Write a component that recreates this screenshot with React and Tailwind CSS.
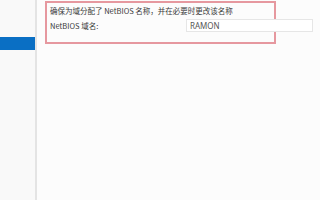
import React from "react";

export default function App() {
  return (
    <div
      className="flex w-[320px] h-[200px] bg-[#fcfcfc] overflow-hidden"
      style={{ fontFamily: '"Noto Sans CJK SC", "Noto Sans", sans-serif' }}
    >
      <div className="w-[37px] shrink-0 bg-[#f9f9f9] border-r-2 border-[#e4e4e4] pt-[37px]">
        <div className="h-[13px] bg-[#0a6fc4]" />
      </div>
      <div className="flex-1 pl-[8px] pt-[1px]">
        <div className="w-[231px] h-[43px] border-2 border-[#e6989f] pl-[3px] pt-[3px] text-[7.5px] leading-[10px] text-[#3a3a3a] whitespace-nowrap">
          <div>确保为域分配了 NetBIOS 名称，并在必要时更改该名称</div>
          <div className="flex items-center mt-[3px]">
            <span className="w-[136px] shrink-0">NetBIOS 域名:</span>
            <div
              className="w-[127px] h-[13px] shrink-0 bg-white border border-[#e6e6e6] pl-[3px] text-[8px] leading-[11px] text-[#555]"
              style={{ fontFamily: '"Noto Sans", sans-serif' }}
            >
              RAMON
            </div>
          </div>
        </div>
      </div>
    </div>
  );
}
